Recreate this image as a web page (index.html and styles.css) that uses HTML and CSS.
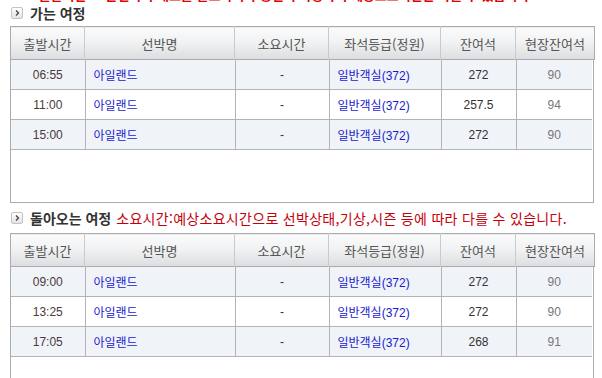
FILE: index.html
```html
<!DOCTYPE html>
<html lang="ko">
<head>
<meta charset="utf-8">
<link rel="stylesheet" href="styles.css">
</head>
<body>
<div class="wrap">
  <p class="notice top-notice">※ 출발시간 30분전까지 매표를 완료하셔야 승선이 가능하며 예상소요시간은 다를 수 있습니다.</p>

  <h2 class="title"><span class="ico"><svg viewBox="0 0 10 10" width="10" height="10"><path d="M4 2.5 L6.5 5 L4 7.5" fill="none" stroke="#444" stroke-width="1.3"/></svg></span>가는 여정</h2>
  <table class="head">
    <colgroup><col class="c1"><col class="c2"><col class="c3"><col class="c4"><col class="c5"><col class="c6"></colgroup>
    <tr><th>출발시간</th><th>선박명</th><th>소요시간</th><th>좌석등급(정원)</th><th>잔여석</th><th>현장잔여석</th></tr>
  </table>
  <div class="body-box">
    <table class="rows">
      <colgroup><col class="c1"><col class="c2"><col class="c3"><col class="c4"><col class="c5"><col class="c6b"></colgroup>
      <tr class="odd"><td class="t">06:55</td><td class="l">아일랜드</td><td class="d">-</td><td class="l">일반객실(372)</td><td class="n">272</td><td class="g">90</td></tr>
      <tr><td class="t">11:00</td><td class="l">아일랜드</td><td class="d">-</td><td class="l">일반객실(372)</td><td class="n">257.5</td><td class="g">94</td></tr>
      <tr class="odd"><td class="t">15:00</td><td class="l">아일랜드</td><td class="d">-</td><td class="l">일반객실(372)</td><td class="n">272</td><td class="g">90</td></tr>
    </table>
  </div>

  <h2 class="title second"><span class="ico"><svg viewBox="0 0 10 10" width="10" height="10"><path d="M4 2.5 L6.5 5 L4 7.5" fill="none" stroke="#444" stroke-width="1.3"/></svg></span>돌아오는 여정 <span class="notice">소요시간:예상소요시간으로 선박상태,기상,시즌 등에 따라 다를 수 있습니다.</span></h2>
  <table class="head">
    <colgroup><col class="c1"><col class="c2"><col class="c3"><col class="c4"><col class="c5"><col class="c6"></colgroup>
    <tr><th>출발시간</th><th>선박명</th><th>소요시간</th><th>좌석등급(정원)</th><th>잔여석</th><th>현장잔여석</th></tr>
  </table>
  <div class="body-box">
    <table class="rows">
      <colgroup><col class="c1"><col class="c2"><col class="c3"><col class="c4"><col class="c5"><col class="c6b"></colgroup>
      <tr class="odd"><td class="t">09:00</td><td class="l">아일랜드</td><td class="d">-</td><td class="l">일반객실(372)</td><td class="n">272</td><td class="g">90</td></tr>
      <tr><td class="t">13:25</td><td class="l">아일랜드</td><td class="d">-</td><td class="l">일반객실(372)</td><td class="n">272</td><td class="g">90</td></tr>
      <tr class="odd"><td class="t">17:05</td><td class="l">아일랜드</td><td class="d">-</td><td class="l">일반객실(372)</td><td class="n">268</td><td class="g">91</td></tr>
    </table>
  </div>
</div>
</body>
</html>
```

FILE: styles.css
```css
html, body {
  margin: 0;
  padding: 0;
  background: #fff;
  overflow: hidden;
}
body {
  font-family: "Liberation Sans", "Noto Sans CJK KR", sans-serif;
  font-size: 12px;
  color: #333;
}
.wrap {
  padding-left: 10px;
  width: 584px;
}
.notice {
  color: #c4000c;
  font-weight: normal;
  font-size: 14px;
  letter-spacing: 0.3px;
  margin: 0;
}
.top-notice {
  color: #e60000;
  font-weight: bold;
  font-size: 13px;
  letter-spacing: 0;
  line-height: 16px;
  margin-top: -13px;
  padding-left: 12px;
  white-space: nowrap;
  font-family: "Noto Sans CJK KR", sans-serif;
}
.title {
  display: flex;
  align-items: center;
  gap: 7px;
  height: 20px;
  margin: 0 0 3px 0;
  font-size: 14px;
  font-weight: bold;
  color: #333;
  white-space: nowrap;
  font-family: "Noto Sans CJK KR", sans-serif;
}
.title .notice {
  margin-left: -2px;
  font-weight: normal;
  font-family: "Noto Sans CJK KR", sans-serif;
}
.title.second {
  margin-top: 4px;
  height: 22px;
  margin-bottom: 4px;
}
.ico {
  display: inline-flex;
  width: 10px;
  height: 10px;
  border: 1px solid #c4c4c4;
  border-radius: 2px;
  background: linear-gradient(#ffffff, #e4e4e4);
  margin-left: 1px;
}
.ico svg { display: block; }
table {
  border-collapse: collapse;
  table-layout: fixed;
}
.head {
  width: 584px;
  border: 1px solid #ababab;
}
.c1 { width: 74px; }
.c2 { width: 150px; }
.c3 { width: 94px; }
.c4 { width: 112px; }
.c5 { width: 75px; }
.c6 { width: 79px; }
.c6b { width: 76px; }
.head th {
  height: 32px;
  padding: 0;
  background: linear-gradient(#fbfbfb, #f1f2f3 45%, #dcdde0);
  border-left: 1px solid #c9cacc;
  font-size: 13px;
  font-weight: normal;
  color: #555;
  font-family: "Noto Sans CJK KR", sans-serif;
}
.head th:first-child { border-left: none; }
.body-box {
  border: 1px solid #ababab;
  border-top: none;
  height: 142px;
}
.rows {
  width: 581px;
}
.rows td {
  height: 29px;
  padding: 0;
  border-bottom: 1px solid #b4b4b4;
  border-left: 1px solid #b4b4b4;
  text-align: center;
  white-space: nowrap;
}
.rows td:first-child { border-left: none; }
.rows tr.odd td { background: #f0f3f8; }
.rows td.l {
  text-align: left;
  padding-left: 8px;
  color: #1a1ad0;
}
.rows td.t { color: #4a3a3a; }
.rows td.n { color: #333; }
.rows td.g { color: #777; }
.rows td.d { color: #333; }
```
